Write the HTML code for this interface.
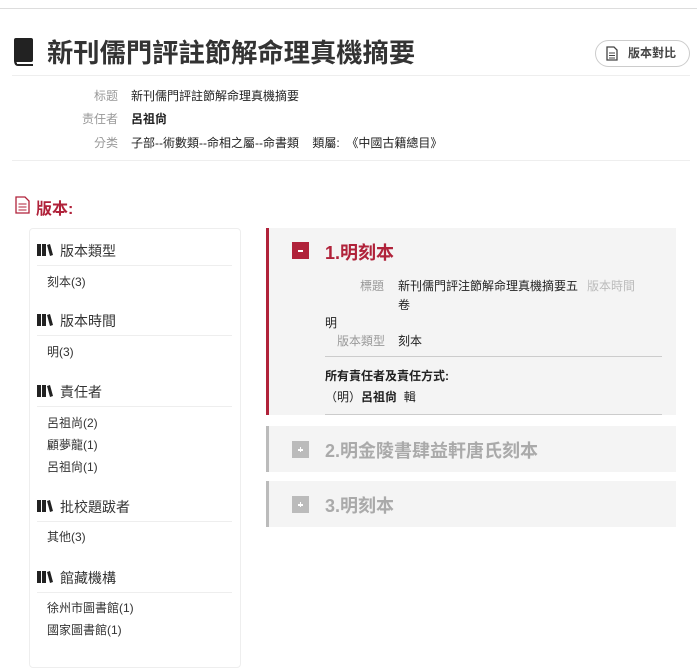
<!DOCTYPE html>
<html><head><meta charset="utf-8"><style>
*{margin:0;padding:0;box-sizing:border-box}
body{width:697px;height:651px;background:#fff;font-family:"Liberation Sans","Noto Sans CJK TC",sans-serif;color:#222;position:relative;overflow:hidden}
.a{position:absolute;white-space:nowrap}
.lbl{color:#999;font-size:12px;text-align:right;width:60px}
.v{font-size:12px;color:#222}
.hd{font-size:14px;color:#333}
.it{font-size:12px;color:#333}
.ln{position:absolute;height:1px;background:#eee}
.bx{position:absolute;width:17px;height:17px}
.bx i{position:absolute;background:#fff}
</style></head><body>
<div class="ln" style="left:0;top:8px;width:697px;background:#ddd"></div>
<svg class="a" style="left:13px;top:38px" width="21" height="29" viewBox="0 0 21 29"><rect x="1" y="0" width="19" height="24" rx="2" fill="#222"/><path d="M1 22 Q1 28 5 28 L20 28 L20 25 L5 25 Q3 25 3 23" fill="#222"/><rect x="4" y="24" width="16" height="2" fill="#fff"/></svg>
<div class="a" style="left:47px;top:35px;font-size:26.3px;font-weight:bold;color:#333;line-height:36px">新刊儒門評註節解命理真機摘要</div>
<div class="a" style="left:595px;top:40px;width:95px;height:27px;border:1px solid #ccc;border-radius:14px;font-size:12px;color:#444;font-weight:bold;line-height:25px;padding-left:32px">版本對比</div>
<svg class="a" style="left:606px;top:46px" width="12" height="15" viewBox="0 0 12 15"><path d="M1 1H8L11 4V14H1Z" fill="none" stroke="#444" stroke-width="1.3"/><path d="M3 7H9M3 9.5H9M3 12H9" stroke="#444"/></svg>
<div class="ln" style="left:12px;top:75px;width:678px"></div>
<div class="a lbl" style="left:58px;top:87px">标题</div><div class="a v" style="left:131px;top:87px">新刊儒門評註節解命理真機摘要</div>
<div class="a lbl" style="left:58px;top:110px">责任者</div><div class="a v" style="left:131px;top:110px;font-weight:bold">呂祖尙</div>
<div class="a lbl" style="left:58px;top:134px">分类</div><div class="a v" style="left:131px;top:134px">子部--術數類--命相之屬--命書類&nbsp;&nbsp;&nbsp; 類屬:&nbsp;&nbsp;《中國古籍總目》</div>
<div class="ln" style="left:12px;top:160px;width:678px"></div>
<svg class="a" style="left:15px;top:196px" width="15" height="18" viewBox="0 0 15 18"><path d="M1 1H10L14 5V17H1Z" fill="none" stroke="#b0223a" stroke-width="1.3"/><path d="M3.5 8H11.5M3.5 11H11.5M3.5 14H11.5" stroke="#b0223a"/></svg>
<div class="a" style="left:36px;top:195px;font-size:16px;font-weight:bold;color:#b0223a">版本:</div>
<div class="a" style="left:29px;top:228px;width:212px;height:440px;border:1px solid #eee;border-radius:4px"></div>
<div class="a" style="left:266px;top:228px;width:410px;height:187px;background:#f4f4f4;border-left:3px solid #b0223a"></div>
<div class="bx" style="left:292px;top:242px;background:#b0223a"><i style="left:6px;top:8px;width:5px;height:1.5px"></i></div>
<div class="a" style="left:325px;top:239px;font-size:18px;font-weight:bold;color:#b0223a">1.明刻本</div>
<div class="a" style="left:360px;top:277px;font-size:12px;color:#999">標題</div>
<div class="a v" style="left:398px;top:277px;line-height:19px;white-space:normal;width:180px">新刊儒門評注節解命理真機摘要五<br>卷</div>
<div class="a" style="left:587px;top:277px;font-size:12px;color:#bbb">版本時間</div>
<div class="a v" style="left:325px;top:314px">明</div>
<div class="a" style="left:337px;top:332px;font-size:12px;color:#999">版本類型</div>
<div class="a v" style="left:398px;top:332px">刻本</div>
<div class="ln" style="left:325px;top:356px;width:337px;background:#ccc"></div>
<div class="a v" style="left:325px;top:367px;font-weight:bold">所有責任者及責任方式:</div>
<div class="a v" style="left:325px;top:388px">（明）<b>呂祖尙</b>&nbsp;&nbsp;輯</div>
<div class="ln" style="left:325px;top:414px;width:337px;background:#ccc"></div>
<div class="a" style="left:266px;top:426px;width:410px;height:46px;background:#f4f4f4;border-left:3px solid #bbb"></div>
<div class="bx" style="left:292px;top:441px;background:#bbb"><i style="left:6px;top:8px;width:5px;height:1.5px"></i><i style="left:7.75px;top:6px;width:1.5px;height:5px"></i></div>
<div class="a" style="left:325px;top:437px;font-size:18px;font-weight:bold;color:#aaa">2.明金陵書肆益軒唐氏刻本</div>
<div class="a" style="left:266px;top:481px;width:410px;height:46px;background:#f4f4f4;border-left:3px solid #bbb"></div>
<div class="bx" style="left:292px;top:496px;background:#bbb"><i style="left:6px;top:8px;width:5px;height:1.5px"></i><i style="left:7.75px;top:6px;width:1.5px;height:5px"></i></div>
<div class="a" style="left:325px;top:492px;font-size:18px;font-weight:bold;color:#aaa">3.明刻本</div>

<svg class="a" style="left:37px;top:244px" width="16" height="12"><rect x="0" y="0" width="4" height="12" fill="#222"/><rect x="5" y="0" width="4" height="12" fill="#222"/><path d="M10 1L13 0L16 11L13 12Z" fill="#222"/></svg>
<div class="a hd" style="left:60px;top:241px">版本類型</div>
<div class="ln" style="left:37px;top:265px;width:195px"></div>
<div class="a it" style="left:47px;top:273px">刻本(3)</div>
<svg class="a" style="left:37px;top:314px" width="16" height="12"><rect x="0" y="0" width="4" height="12" fill="#222"/><rect x="5" y="0" width="4" height="12" fill="#222"/><path d="M10 1L13 0L16 11L13 12Z" fill="#222"/></svg>
<div class="a hd" style="left:60px;top:311px">版本時間</div>
<div class="ln" style="left:37px;top:335px;width:195px"></div>
<div class="a it" style="left:47px;top:343px">明(3)</div>
<svg class="a" style="left:37px;top:385px" width="16" height="12"><rect x="0" y="0" width="4" height="12" fill="#222"/><rect x="5" y="0" width="4" height="12" fill="#222"/><path d="M10 1L13 0L16 11L13 12Z" fill="#222"/></svg>
<div class="a hd" style="left:60px;top:382px">責任者</div>
<div class="ln" style="left:37px;top:406px;width:195px"></div>
<div class="a it" style="left:47px;top:414px">呂祖尚(2)</div>
<div class="a it" style="left:47px;top:436px">顧夢龍(1)</div>
<div class="a it" style="left:47px;top:458px">呂祖尙(1)</div>
<svg class="a" style="left:37px;top:500px" width="16" height="12"><rect x="0" y="0" width="4" height="12" fill="#222"/><rect x="5" y="0" width="4" height="12" fill="#222"/><path d="M10 1L13 0L16 11L13 12Z" fill="#222"/></svg>
<div class="a hd" style="left:60px;top:497px">批校題跋者</div>
<div class="ln" style="left:37px;top:521px;width:195px"></div>
<div class="a it" style="left:47px;top:528px">其他(3)</div>
<svg class="a" style="left:37px;top:571px" width="16" height="12"><rect x="0" y="0" width="4" height="12" fill="#222"/><rect x="5" y="0" width="4" height="12" fill="#222"/><path d="M10 1L13 0L16 11L13 12Z" fill="#222"/></svg>
<div class="a hd" style="left:60px;top:568px">館藏機構</div>
<div class="ln" style="left:37px;top:592px;width:195px"></div>
<div class="a it" style="left:47px;top:599px">徐州市圖書館(1)</div>
<div class="a it" style="left:47px;top:621px">國家圖書館(1)</div>
</body></html>
